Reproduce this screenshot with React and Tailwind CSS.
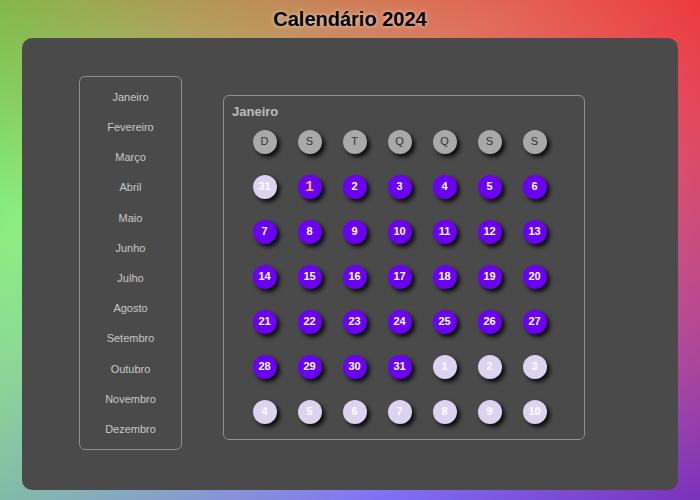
const months = [
  'Janeiro', 'Fevereiro', 'Março', 'Abril', 'Maio', 'Junho',
  'Julho', 'Agosto', 'Setembro', 'Outubro', 'Novembro', 'Dezembro',
];

const weekDays = ['D', 'S', 'T', 'Q', 'Q', 'S', 'S'];

// Janeiro 2024 começa na segunda-feira
const buildDays = () => {
  const days = [{ n: 31, other: true }];
  for (let i = 1; i <= 31; i++) days.push({ n: i, today: i === 1 });
  let next = 1;
  while (days.length < 42) days.push({ n: next++, other: true });
  return days;
};

const Dot = ({ children, className }) => (
  <div
    className={`flex h-6 w-6 items-center justify-center rounded-full shadow-[3px_3px_4px_rgba(0,0,0,0.85)] ${className}`}
  >
    {children}
  </div>
);

const App = () => {
  const days = buildDays();

  return (
    <div className="flex h-[500px] w-full flex-col bg-white font-['Liberation_Sans',Arial,sans-serif]">
      <div className="flex h-full flex-col bg-[linear-gradient(217deg,rgba(240,0,0,.75),rgba(255,0,0,0)_70.71%),linear-gradient(127deg,rgba(40,220,20,.7),rgba(0,255,0,0)_70.71%),linear-gradient(336deg,rgba(30,0,240,.75),rgba(0,0,255,0)_70.71%)]">
        <h1 className="flex h-[38px] items-center justify-center text-[20px] font-bold text-black [text-shadow:0_0_4px_rgba(255,255,255,0.7)]">
          Calendário 2024
        </h1>

        <div className="mx-[22px] flex h-[452px] items-start gap-[41px] rounded-[10px] bg-[#4a4a4a] pl-[57px] pt-[38px]">
          <ul className="w-[103px] rounded-[6px] border border-[#8f8f8f] py-[5px]">
            {months.map((m) => (
              <li key={m} className="flex h-[30.2px] items-center justify-center text-[11px] text-[#c9c9c9]">
                {m}
              </li>
            ))}
          </ul>

          <div className="mt-[19px] h-[345px] w-[362px] rounded-[6px] border border-[#8f8f8f]">
            <div className="pl-[8px] pt-[6px] text-[13px] font-bold text-[#bdbdbd]">Janeiro</div>
            <div className="mt-[8px] grid w-[333px] grid-cols-7 gap-y-[21px] pl-[18px]">
              {weekDays.map((d, i) => (
                <div key={i} className="flex justify-center">
                  <Dot className="bg-[#a9a9a9] text-[11px] text-[#333]">{d}</Dot>
                </div>
              ))}
              {days.map((d, i) => (
                <div key={i} className="flex justify-center">
                  {d.other ? (
                    <Dot className="bg-[#dcd3f0] text-[11px] font-bold text-white">{d.n}</Dot>
                  ) : d.today ? (
                    <Dot className="bg-[#6a00f4] text-[15px] font-bold text-[#ffc21a]">{d.n}</Dot>
                  ) : (
                    <Dot className="bg-[#6a00f4] text-[11px] font-bold text-white">{d.n}</Dot>
                  )}
                </div>
              ))}
            </div>
          </div>
        </div>
      </div>
    </div>
  );
};

export default App;
